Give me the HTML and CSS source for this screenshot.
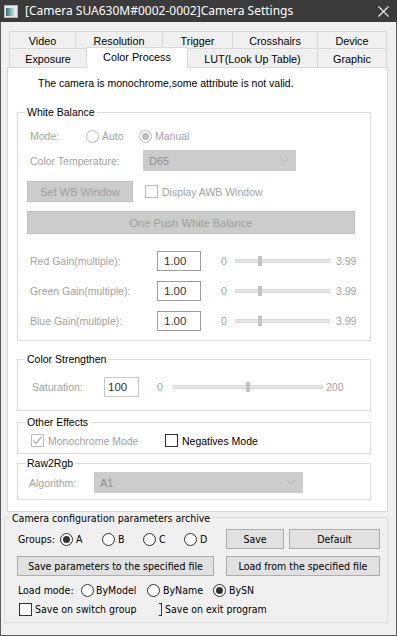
FILE: index.html
```html
<!DOCTYPE html>
<html>
<head>
<meta charset="utf-8">
<link rel="stylesheet" href="styles.css">
</head>
<body>
<div class="window">
  <div class="titlebar">
    <svg class="appicon" width="14" height="13" viewBox="0 0 14 13">
      <defs>
        <linearGradient id="ig" x1="0" x2="1" y1="0" y2="0">
          <stop offset="0" stop-color="#2f6f78"/>
          <stop offset="0.55" stop-color="#8fc3c4"/>
          <stop offset="1" stop-color="#f4f4f4"/>
        </linearGradient>
      </defs>
      <rect x="0.5" y="0.5" width="13" height="12" fill="#e6e6e6" stroke="#b8b8b8"/>
      <rect x="2" y="3" width="10" height="8" fill="url(#ig)"/>
    </svg>
    <span class="title">[Camera SUA630M#0002-0002]Camera Settings</span>
    <svg class="close" width="11" height="11" viewBox="0 0 11 11">
      <path d="M0.5 0.5 L10.5 10.5 M10.5 0.5 L0.5 10.5" stroke="#ffffff" stroke-width="1.1" fill="none"/>
    </svg>
  </div>

  <div class="tabs">
    <div class="tabrow row1">
      <div class="tab t-video">Video</div>
      <div class="tab t-res">Resolution</div>
      <div class="tab t-trig">Trigger</div>
      <div class="tab t-cross">Crosshairs</div>
      <div class="tab t-dev last">Device</div>
    </div>
    <div class="tabrow row2">
      <div class="tab t-exp">Exposure</div>
      <div class="tab t-color selected">Color Process</div>
      <div class="tab t-lut">LUT(Look Up Table)</div>
      <div class="tab t-graph last">Graphic</div>
    </div>
  </div>

  <div class="panel">
    <div class="msg">The camera is monochrome,some attribute is not valid.</div>

    <div class="group g-wb">
      <div class="gtitle">White Balance</div>
      <div class="row r-mode">
        <span class="lbl dis l-mode">Mode:</span>
        <span class="radio-item ri-auto"><span class="radio dis"></span><span class="dis">Auto</span></span>
        <span class="radio-item"><span class="radio dis on"></span><span class="dis">Manual</span></span>
      </div>
      <div class="row r-ct">
        <span class="lbl dis l-ct">Color Temperature:</span>
        <div class="combo c-ct">
          <span>D65</span>
          <svg class="chev" width="9" height="5" viewBox="0 0 9 5"><path d="M0.5 0.5 L4.5 4.5 L8.5 0.5" stroke="#b4b4b4" fill="none"/></svg>
        </div>
      </div>
      <div class="row r-setwb">
        <div class="btn-dis b-setwb">Set WB Window</div>
        <span class="check dis c-awb"></span>
        <span class="dis">Display AWB Window</span>
      </div>
      <div class="row r-push">
        <div class="btn-dis b-push">One Push White Balance</div>
      </div>
      <div class="row r-gain r-red">
        <span class="lbl dis l-gain">Red Gain(multiple):</span>
        <div class="tbox tb-gain">1.00</div>
        <span class="dis s-min">0</span>
        <div class="track tr-gain"><span class="thumb th-gain"></span></div>
        <span class="dis s-max">3.99</span>
      </div>
      <div class="row r-gain">
        <span class="lbl dis l-gain">Green Gain(multiple):</span>
        <div class="tbox tb-gain">1.00</div>
        <span class="dis s-min">0</span>
        <div class="track tr-gain"><span class="thumb th-gain"></span></div>
        <span class="dis s-max">3.99</span>
      </div>
      <div class="row r-gain">
        <span class="lbl dis l-gain">Blue Gain(multiple):</span>
        <div class="tbox tb-gain">1.00</div>
        <span class="dis s-min">0</span>
        <div class="track tr-gain"><span class="thumb th-gain"></span></div>
        <span class="dis s-max">3.99</span>
      </div>
    </div>

    <div class="group g-cs">
      <div class="gtitle">Color Strengthen</div>
      <div class="row r-sat">
        <span class="lbl dis l-sat">Saturation:</span>
        <div class="tbox tb-sat">100</div>
        <span class="dis s-min2">0</span>
        <div class="track tr-sat"><span class="thumb th-sat"></span></div>
        <span class="dis s-max2">200</span>
      </div>
    </div>

    <div class="group g-oe">
      <div class="gtitle">Other Effects</div>
      <div class="row r-oe">
        <span class="check-item ci-mono">
          <span class="check dis">
            <svg width="11" height="11" viewBox="0 0 11 11"><path d="M1.5 5.5 L4 8.5 L9.5 2" stroke="#b0b0b0" stroke-width="1.2" fill="none"/></svg>
          </span>
          <span class="dis">Monochrome Mode</span>
        </span>
        <span class="check-item">
          <span class="check"></span>
          <span>Negatives Mode</span>
        </span>
      </div>
    </div>

    <div class="group g-rr">
      <div class="gtitle">Raw2Rgb</div>
      <div class="row r-alg">
        <span class="lbl dis l-alg">Algorithm:</span>
        <div class="combo c-alg">
          <span>A1</span>
          <svg class="chev" width="9" height="5" viewBox="0 0 9 5"><path d="M0.5 0.5 L4.5 4.5 L8.5 0.5" stroke="#b4b4b4" fill="none"/></svg>
        </div>
      </div>
    </div>
  </div>

  <div class="archive">
    <div class="atitle">Camera configuration parameters archive</div>
    <div class="arow ar-groups">
      <span class="alabel al-groups">Groups:</span>
      <span class="aradio-item ai-42"><span class="aradio on"></span>A</span>
      <span class="aradio-item ai-41"><span class="aradio"></span>B</span>
      <span class="aradio-item ai-41"><span class="aradio"></span>C</span>
      <span class="aradio-item ai-42"><span class="aradio"></span>D</span>
      <div class="abtn b-save">Save</div>
      <div class="abtn b-default">Default</div>
    </div>
    <div class="arow ar-files">
      <div class="abtn b-savefile">Save parameters to the specified file</div>
      <div class="abtn b-loadfile">Load from the specified file</div>
    </div>
    <div class="arow ar-load">
      <span class="alabel al-load">Load mode:</span>
      <span class="aradio-item ai-66 gap2"><span class="aradio"></span>ByModel</span>
      <span class="aradio-item ai-66"><span class="aradio"></span>ByName</span>
      <span class="aradio-item"><span class="aradio on"></span>BySN</span>
    </div>
    <div class="arow ar-checks">
      <span class="acheck-item"><span class="acheck"></span>Save on switch group</span>
      <span class="bracket"></span>
      <span class="exit-text">Save on exit program</span>
    </div>
  </div>
</div>
</body>
</html>
```

FILE: styles.css
```css
* { box-sizing: border-box; }
html, body { margin: 0; padding: 0; }
body { width: 397px; height: 636px; overflow: hidden; background: #f0f0f0; }

.window {
  width: 397px;
  height: 636px;
  background: #f0f0f0;
  border-left: 1px solid #5c5c5c;
  border-right: 1px solid #5c5c5c;
  border-bottom: 1px solid #5c5c5c;
  font-family: "Liberation Sans", Arial, sans-serif;
  font-size: 10.5px;
  color: #000;
}

/* title bar */
.titlebar {
  height: 22px;
  margin: 0 -1px;
  background: #3b3b3b;
  display: flex;
  align-items: center;
}
.appicon { margin-left: 4px; flex: none; }
.title {
  margin-left: 7px;
  font-family: "Noto Sans", "Open Sans", sans-serif;
  font-size: 12px;
  color: #ffffff;
  white-space: nowrap;
  line-height: 22px;
}
.close { margin-left: auto; margin-right: 8px; flex: none; }

/* tabs */
.tabs { margin-top: 9px; padding-left: 8px; }
.tabrow { display: flex; }
.row1 { height: 17px; }
.row2 { height: 19px; align-items: flex-end; }
.tab {
  height: 100%;
  border-top: 1px solid #d9d9d9;
  border-left: 1px solid #d9d9d9;
  background: #f0f0f0;
  display: flex;
  align-items: center;
  justify-content: center;
  white-space: nowrap;
  font-size: 10.8px;
}
.tab.last { border-right: 1px solid #d9d9d9; }
.row1 .tab { padding-top: 1px; }
.row2 .tab { padding-top: 2px; }
.t-video { width: 66px; }
.t-res { width: 87px; }
.t-trig { width: 70px; }
.t-cross { width: 85px; }
.t-dev { width: 70px; }
.t-exp { width: 77px; }
.t-color { width: 102px; }
.t-lut { width: 129px; border-left: none; }
.t-graph { width: 70px; }
.tab.selected {
  height: 21px;
  margin-bottom: -1px;
  background: #ffffff;
  border-right: 1px solid #d9d9d9;
  position: relative;
  z-index: 2;
  padding-top: 0;
  padding-bottom: 3px;
}

/* panel */
.panel {
  margin-left: 6px;
  width: 381px;
  height: 445px;
  background: #ffffff;
  border: 1px solid #d9d9d9;
  padding-left: 9px;
  overflow: hidden;
}
.msg {
  margin-top: 7px;
  margin-left: 21px;
  line-height: 16px;
  white-space: nowrap;
}

.group {
  width: 354px;
  border: 1px solid #dcdcdc;
  display: flex;
  flex-direction: column;
}
.gtitle {
  align-self: flex-start;
  margin-top: -8px;
  margin-left: 7px;
  padding: 0 2px;
  height: 14px;
  line-height: 14px;
  background: #ffffff;
  white-space: nowrap;
}
.g-wb { margin-top: 21px; height: 229px; }
.g-cs { margin-top: 18px; height: 52px; }
.g-oe { margin-top: 11px; height: 32px; }
.g-rr { margin-top: 9px; height: 37px; }

.row { display: flex; align-items: center; white-space: nowrap; flex: none; }
.dis { color: #a3a3a3; }
.lbl { flex: none; }

.r-mode { margin-top: 9px; height: 16px; }
.l-mode { margin-left: 12px; width: 56px; }
.radio-item { display: flex; align-items: center; gap: 3px; }
.ri-auto { width: 53px; }
.radio {
  width: 13px; height: 13px;
  border-radius: 50%;
  border: 1px solid #333;
  background: #fff;
  display: flex; align-items: center; justify-content: center;
  flex: none;
}
.radio.dis { border-color: #bcbcbc; }
.radio.on::after {
  content: "";
  width: 7px; height: 7px; border-radius: 50%;
  background: #bcbcbc;
}

.r-ct { margin-top: 6px; height: 21px; }
.l-ct { margin-left: 12px; width: 113px; }
.combo {
  height: 21px;
  background: #cccccc;
  border: 1px solid #cccccc;
  color: #8e8e8e;
  display: flex;
  align-items: center;
  padding-left: 5px;
  padding-right: 6px;
  font-size: 11px;
}
.combo .chev { margin-left: auto; }
.c-ct { width: 153px; }

.r-setwb { margin-top: 10px; height: 21px; }
.btn-dis {
  height: 100%;
  background: #cccccc;
  border: 1px solid #bfbfbf;
  color: #a0a0a0;
  display: flex; align-items: center; justify-content: center;
  font-size: 11px;
}
.b-setwb { margin-left: 9px; width: 106px; }
.check {
  width: 13px; height: 13px;
  border: 1px solid #333;
  background: #fff;
  flex: none;
  display: flex; align-items: center; justify-content: center;
}
.check.dis { border-color: #bcbcbc; }
.c-awb { margin-left: 12px; margin-right: 4px; }

.r-push { margin-top: 9px; height: 23px; }
.b-push { margin-left: 9px; width: 328px; }

.r-gain { margin-top: 10px; height: 20px; }
.r-red { margin-top: 17px; }
.l-gain { margin-left: 12px; width: 127px; }
.tbox {
  height: 20px;
  border: 1px solid #9c9c9c;
  background: #fff;
  color: #333;
  display: flex; align-items: center;
  font-size: 11.5px;
}
.tb-gain { width: 44px; padding-left: 6px; }
.s-min { margin-left: 20px; width: 14px; }
.track {
  position: relative;
  height: 4px;
  background: #e6e6e6;
  border: 1px solid #dadada;
  flex: none;
}
.thumb {
  position: absolute;
  top: -4px;
  width: 4px;
  height: 10px;
  background: #c4c4c4;
}
.tr-gain { width: 95px; }
.th-gain { left: 22px; }
.s-max { margin-left: 6px; }

.r-sat { margin-top: 11px; height: 20px; }
.l-sat { margin-left: 14px; width: 72px; }
.tb-sat { width: 35px; padding-left: 3px; border-color: #c8c8c8; }
.s-min2 { margin-left: 18px; width: 16px; }
.tr-sat { width: 150px; }
.th-sat { left: 72px; }
.s-max2 { margin-left: 3px; }

.r-oe { margin-top: 5px; height: 13px; }
.check-item { display: flex; align-items: center; gap: 4px; }
.ci-mono { margin-left: 13px; width: 134px; }

.r-alg { margin-top: 2px; height: 21px; }
.l-alg { margin-left: 11px; width: 65px; }
.c-alg { width: 209px; }

/* archive */
.archive {
  margin-top: 5px;
  margin-left: 3px;
  width: 384px;
  height: 106px;
  border: 1px solid #dcdcdc;
  display: flex;
  flex-direction: column;
  font-family: "DejaVu Sans Condensed", "DejaVu Sans", sans-serif;
  font-stretch: semi-condensed;
  font-size: 10.5px;
  color: #000;
}
.atitle {
  align-self: flex-start;
  margin-top: -6px;
  margin-left: 5px;
  padding: 0 2px;
  height: 12px;
  line-height: 12px;
  background: #f0f0f0;
  white-space: nowrap;
}
.arow { display: flex; align-items: center; white-space: nowrap; flex: none; }
.ar-groups { margin-top: 5px; height: 20px; }
.alabel { flex: none; }
.al-groups { margin-left: 13px; width: 42px; }
.aradio-item { display: flex; align-items: center; gap: 3px; flex: none; }
.aradio-item.gap2 { gap: 2px; }
.ai-42 { width: 42px; }
.ai-41 { width: 41px; }
.ai-66 { width: 66px; }
.aradio {
  width: 13px; height: 13px;
  border-radius: 50%;
  border: 1px solid #333;
  background: #fff;
  display: flex; align-items: center; justify-content: center;
  flex: none;
}
.aradio.on::after {
  content: "";
  width: 7px; height: 7px; border-radius: 50%;
  background: #333;
}
.abtn {
  height: 20px;
  background: #e1e1e1;
  border: 1px solid #adadad;
  display: flex; align-items: center; justify-content: center;
  flex: none;
}
.b-save { width: 58px; }
.b-default { margin-left: 5px; width: 91px; }
.ar-files { margin-top: 7px; height: 20px; }
.b-savefile { margin-left: 12px; width: 197px; }
.b-loadfile { margin-left: 12px; width: 154px; }
.ar-load { margin-top: 7px; height: 14px; }
.al-load { margin-left: 13px; width: 63px; }
.ar-checks { margin-top: 5px; height: 14px; }
.acheck-item { display: flex; align-items: center; gap: 3px; margin-left: 14px; width: 140px; flex: none; }
.acheck { width: 13px; height: 13px; border: 1px solid #333; background: #fff; flex: none; }
.bracket {
  width: 3px; height: 13px;
  border: 1px solid #333;
  border-left: none;
  flex: none;
}
.exit-text { margin-left: 3px; }
```
